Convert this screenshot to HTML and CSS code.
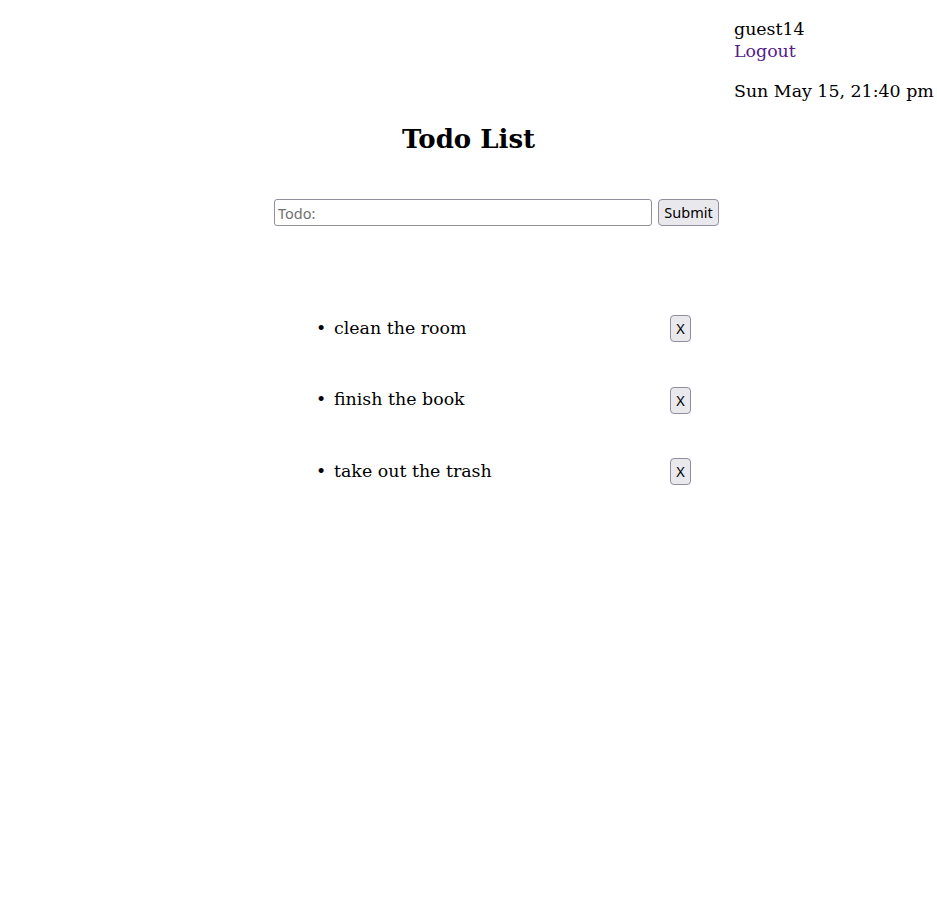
FILE: index.html
```html
<!DOCTYPE html>
<html>
<head>
<meta charset="utf-8">
<link rel="stylesheet" href="styles.css">
</head>
<body>
<header class="top">
  <div class="user">
    <div class="name">guest14</div>
    <a class="logout" href="#">Logout</a>
    <div class="date">Sun May 15, 21:40 pm</div>
  </div>
</header>
<main class="main">
  <h2 class="title">Todo List</h2>
  <form class="add-form">
    <input class="todo-input" type="text" placeholder="Todo:">
    <button class="btn btn-submit" type="button">Submit</button>
  </form>
  <ul class="todo-list">
    <li class="todo-item"><span class="todo-text">clean the room</span><button class="btn btn-x" type="button">X</button></li>
    <li class="todo-item"><span class="todo-text">finish the book</span><button class="btn btn-x" type="button">X</button></li>
    <li class="todo-item"><span class="todo-text">take out the trash</span><button class="btn btn-x" type="button">X</button></li>
  </ul>
</main>
</body>
</html>
```
FILE: styles.css
```css
html, body {
  margin: 0;
  padding: 0;
  background: #fff;
}
body {
  font-family: "DejaVu Serif", serif;
  font-size: 17.4px;
  color: #000;
}
.top {
  display: flex;
  justify-content: flex-end;
  padding: 18px 3px 0 0;
}
.user {
  width: 200px;
  line-height: 22px;
}
.logout {
  display: block;
  color: #551a8b;
  text-decoration: none;
}
.date {
  margin-top: 18px;
}
.main {
  display: flex;
  flex-direction: column;
  align-items: center;
}
.title {
  font-size: 26px;
  font-weight: bold;
  margin: 22px 0 0 0;
  line-height: 30px;
}
.add-form {
  display: flex;
  align-items: center;
  gap: 6px;
  margin: 45px 0 0 56px;
}
.todo-input {
  box-sizing: border-box;
  width: 378px;
  height: 27px;
  border: 1px solid #8f8f9d;
  border-radius: 3px;
  padding: 1px 3px;
  font-family: "Noto Sans", sans-serif;
  font-size: 14.5px;
}
.todo-input::placeholder {
  color: #707070;
}
.btn {
  box-sizing: border-box;
  height: 27px;
  padding: 0 0 1px 0;
  border: 1px solid #8f8f9d;
  border-radius: 4px;
  background: #e9e9ed;
  font-family: "Noto Sans", sans-serif;
  font-size: 14.5px;
  color: #000;
}
.btn-submit {
  width: 61px;
}
.btn-x {
  width: 21px;
}
.todo-list {
  list-style: none;
  width: 373px;
  margin: 89px 0 0 72px;
  padding: 0;
}
.todo-item {
  display: flex;
  align-items: center;
  justify-content: space-between;
  height: 27px;
  margin-bottom: 44.5px;
}
.todo-text {
  position: relative;
  top: -1px;
}
.todo-text::before {
  content: "•";
  display: inline-block;
  width: 18px;
  margin-left: -2px;
}
```
